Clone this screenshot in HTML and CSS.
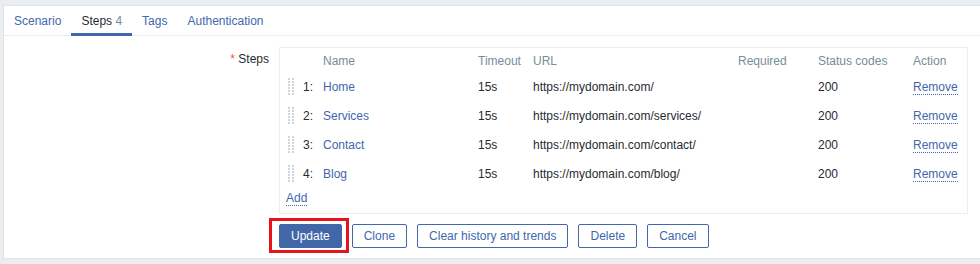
FILE: index.html
```html
<!DOCTYPE html>
<html lang="en">
<head>
    <meta charset="UTF-8">
    <meta name="viewport" content="width=device-width, initial-scale=1.0">
    <title>Web scenario steps</title>
    <link rel="stylesheet" href="styles.css">
</head>
<body>
    <div class="container">
        <ul class="tabs">
            <li class="tab"><a href="#">Scenario</a></li>
            <li class="tab active">Steps <span class="count">4</span></li>
            <li class="tab"><a href="#">Tags</a></li>
            <li class="tab"><a href="#">Authentication</a></li>
        </ul>
        <div class="form">
            <div class="form-row">
                <label class="form-label"><span class="required">*</span> Steps</label>
                <div class="steps-box">
                    <table class="steps-table">
                        <colgroup>
                            <col style="width: 23px">
                            <col style="width: 20px">
                            <col style="width: 155px">
                            <col style="width: 55px">
                            <col style="width: 205px">
                            <col style="width: 80px">
                            <col style="width: 95px">
                            <col>
                        </colgroup>
                        <thead>
                            <tr>
                                <th></th>
                                <th></th>
                                <th>Name</th>
                                <th>Timeout</th>
                                <th>URL</th>
                                <th>Required</th>
                                <th>Status codes</th>
                                <th>Action</th>
                            </tr>
                        </thead>
                        <tbody id="steps"></tbody>
                    </table>
                    <div class="add-row"><a href="#" class="link-action">Add</a></div>
                </div>
            </div>
            <div class="buttons">
                <span class="highlight-wrap">
                    <button class="btn btn-primary">Update</button>
                    <span class="highlight"></span>
                </span>
                <button class="btn">Clone</button>
                <button class="btn">Clear history and trends</button>
                <button class="btn">Delete</button>
                <button class="btn">Cancel</button>
            </div>
        </div>
    </div>
    <script>
        // Build step rows
        const steps = [
            { name: 'Home', url: 'https://mydomain.com/' },
            { name: 'Services', url: 'https://mydomain.com/services/' },
            { name: 'Contact', url: 'https://mydomain.com/contact/' },
            { name: 'Blog', url: 'https://mydomain.com/blog/' }
        ];
        const handle = '<svg width="7" height="18" viewBox="0 0 7 18">' +
            [0, 3, 6, 9, 12, 15].map(y => `<rect x="0" y="${y}" width="2" height="2"/><rect x="4" y="${y}" width="2" height="2"/>`).join('') +
            '</svg>';
        const tbody = document.getElementById('steps');
        steps.forEach((step, i) => {
            const tr = document.createElement('tr');
            tr.innerHTML = `
                <td class="handle">${handle}</td>
                <td>${i + 1}:</td>
                <td><a href="#" class="step-name">${step.name}</a></td>
                <td>15s</td>
                <td>${step.url}</td>
                <td></td>
                <td>200</td>
                <td><a href="#" class="link-action">Remove</a></td>`;
            tbody.appendChild(tr);
        });
    </script>
</body>
</html>
```

FILE: styles.css
```css
body {
    margin: 0;
    background-color: #ebeef0;
    font-family: "Liberation Sans", Arial, sans-serif;
    font-size: 12px;
    line-height: 14px;
    color: #1f2c33;
    overflow: hidden;
}
a {
    color: #4267ad;
    text-decoration: none;
}
.container {
    background-color: #fff;
    border: 1px solid #dfe4e7;
    border-right: none;
    margin: 5px -10px 0 3px;
}
.tabs {
    display: flex;
    list-style: none;
    margin: 0;
    padding: 0;
    height: 29px;
    border-bottom: 1px solid #ebeef0;
}
.tab {
    padding: 8px 10px 5px;
    border-bottom: 3px solid transparent;
    margin-bottom: -1px;
}
.tab.active {
    border-bottom-color: #4267ad;
}
.tab .count {
    color: #768d99;
}
.form {
    padding: 11px 0 10px;
}
.form-row {
    display: flex;
    gap: 10px;
}
.form-label {
    width: 265px;
    text-align: right;
    padding-top: 5px;
}
.required {
    color: #e45959;
}
.steps-box {
    width: 689px;
    box-sizing: border-box;
    border: 1px solid #ebeef0;
}
.steps-table {
    width: 100%;
    table-layout: fixed;
    border-collapse: collapse;
    border-spacing: 0;
}
.steps-table th {
    text-align: left;
    font-weight: normal;
    color: #768d99;
    padding: 6px 0 4px;
    white-space: nowrap;
}
.steps-table td {
    padding: 8px 0 7px;
    white-space: nowrap;
    vertical-align: middle;
}
.steps-table td.handle {
    padding: 0 0 0 8px;
}
.handle svg {
    display: block;
    fill: #cfd5d9;
}
.link-action {
    border-bottom: 1px dotted #4267ad;
}
.add-row {
    padding: 3px 0 8px 6px;
}
.buttons {
    display: flex;
    gap: 10px;
    margin: 10px 0 0 275px;
}
.btn {
    height: 24px;
    padding: 0 11px;
    border: 1px solid #4267ad;
    border-radius: 2px;
    background-color: #fff;
    color: #4267ad;
    font-family: inherit;
    font-size: 12px;
    cursor: pointer;
}
.btn-primary {
    background-color: #4267a8;
    border-color: #4267a8;
    color: #fff;
}
.highlight-wrap {
    position: relative;
    display: inline-flex;
}
.highlight {
    position: absolute;
    left: -10px;
    top: -6px;
    width: 80px;
    height: 35px;
    box-sizing: border-box;
    border: 3px solid #e3141e;
}
```
